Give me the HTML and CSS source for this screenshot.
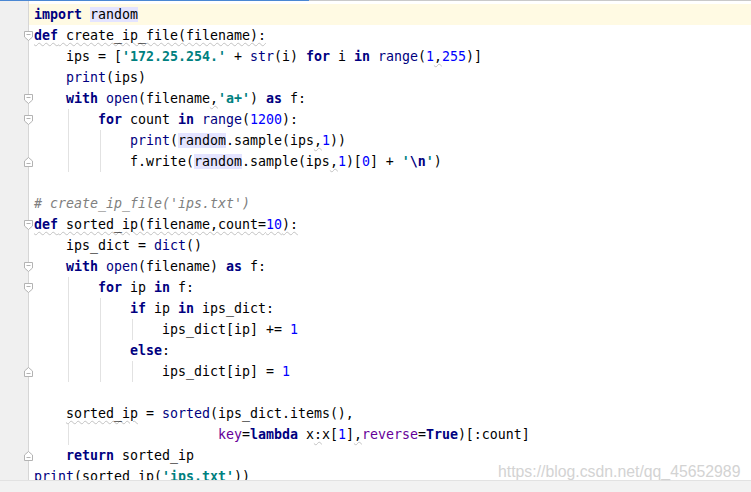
FILE: index.html
```html
<!DOCTYPE html>
<html>
<head>
<meta charset="utf-8">
<link rel="stylesheet" href="styles.css">
</head>
<body>
<div class="tabline"></div>
<div class="editor">
<div class="ln cur"><span class="kw">import</span> <span class="hl">random</span></div>
<div class="ln"><svg class="fold" viewBox="0 0 9 10"><path d="M0.5 0.5H8.5V6L4.5 9.5L0.5 6Z"/><path d="M2.5 3.5H6.5"/></svg><span class="wv"><span class="kw">def</span> create_ip_file(filename):</span></div>
<div class="ln">    ips = [<span class="st">'172.25.254.'</span> + <span class="bi">str</span>(i) <span class="kw">for</span> i <span class="kw">in</span> <span class="bi">range</span>(<span class="nu">1</span><span class="wv">,</span><span class="nu">255</span>)]</div>
<div class="ln">    <span class="bi">print</span>(ips)</div>
<div class="ln"><svg class="fold" viewBox="0 0 9 10"><path d="M0.5 0.5H8.5V6L4.5 9.5L0.5 6Z"/><path d="M2.5 3.5H6.5"/></svg>    <span class="kw">with</span> <span class="bi">open</span>(filename<span class="wv">,</span><span class="st">'a+'</span>) <span class="kw">as</span> f:</div>
<div class="ln g1"><svg class="fold" viewBox="0 0 9 10"><path d="M0.5 0.5H8.5V6L4.5 9.5L0.5 6Z"/><path d="M2.5 3.5H6.5"/></svg>        <span class="kw">for</span> count <span class="kw">in</span> <span class="bi">range</span>(<span class="nu">1200</span>):</div>
<div class="ln g12">            <span class="bi">print</span>(<span class="hl">random</span>.sample(ips<span class="wv">,</span><span class="nu">1</span>))</div>
<div class="ln g12"><svg class="fold" viewBox="0 0 9 10"><path d="M0.5 9.5H8.5V4L4.5 0.5L0.5 4Z"/><path d="M2.5 6.5H6.5"/></svg>            f.write(<span class="hl">random</span>.sample(ips<span class="wv">,</span><span class="nu">1</span>)[<span class="nu">0</span>] + <span class="st">'<span class="esc">\n</span>'</span>)</div>
<div class="ln"> </div>
<div class="ln"><span class="cm"># create_ip_file('ips.txt')</span></div>
<div class="ln"><svg class="fold" viewBox="0 0 9 10"><path d="M0.5 0.5H8.5V6L4.5 9.5L0.5 6Z"/><path d="M2.5 3.5H6.5"/></svg><span class="wv"><span class="kw">def</span> sorted_ip(filename,count=<span class="nu">10</span>):</span></div>
<div class="ln">    ips_dict = <span class="bi">dict</span>()</div>
<div class="ln"><svg class="fold" viewBox="0 0 9 10"><path d="M0.5 0.5H8.5V6L4.5 9.5L0.5 6Z"/><path d="M2.5 3.5H6.5"/></svg>    <span class="kw">with</span> <span class="bi">open</span>(filename) <span class="kw">as</span> f:</div>
<div class="ln g1"><svg class="fold" viewBox="0 0 9 10"><path d="M0.5 0.5H8.5V6L4.5 9.5L0.5 6Z"/><path d="M2.5 3.5H6.5"/></svg>        <span class="kw">for</span> ip <span class="kw">in</span> f:</div>
<div class="ln g12">            <span class="kw">if</span> ip <span class="kw">in</span> ips_dict:</div>
<div class="ln g123">                ips_dict[ip] += <span class="nu">1</span></div>
<div class="ln g12">            <span class="kw">else</span>:</div>
<div class="ln g123"><svg class="fold" viewBox="0 0 9 10"><path d="M0.5 9.5H8.5V4L4.5 0.5L0.5 4Z"/><path d="M2.5 6.5H6.5"/></svg>                ips_dict[ip] = <span class="nu">1</span></div>
<div class="ln"> </div>
<div class="ln">    <span class="wv">sorted_ip</span> = <span class="bi">sorted</span>(ips_dict.items(),</div>
<div class="ln g1">                       <span class="kwa">key</span>=<span class="kw">lambda</span> x<span class="wv">:</span>x[<span class="nu">1</span>]<span class="wv">,</span><span class="kwa">reverse</span>=<span class="kw">True</span>)[:count]</div>
<div class="ln"><svg class="fold" viewBox="0 0 9 10"><path d="M0.5 9.5H8.5V4L4.5 0.5L0.5 4Z"/><path d="M2.5 6.5H6.5"/></svg>    <span class="kw">return</span> sorted_ip</div>
<div class="ln"><span class="bi">print</span>(sorted_ip(<span class="st">'ips.txt'</span>))</div>
</div>
<div class="hbar"></div>
<div class="wm">https://blog.csdn.net/qq_45652989</div>
</body>
</html>
```
FILE: styles.css
```css
html, body {
  margin: 0;
  padding: 0;
  width: 751px;
  height: 492px;
  overflow: hidden;
  background: #ffffff;
}
body {
  position: relative;
}
.tabline {
  height: 1px;
  background: linear-gradient(to right, #4a87d3 309px, #c9c9c9 309px);
}
.editor {
  height: 476px;
  padding-top: 3px;
  overflow: hidden;
  background: linear-gradient(to right, #f0f0f0 28px, #d6d6d6 28px, #d6d6d6 29px, #ffffff 29px);
}
.ln {
  position: relative;
  height: 21px;
  line-height: 21px;
  padding-left: 34px;
  white-space: pre;
  font-family: "DejaVu Sans Mono", monospace;
  font-size: 13.29px;
  color: #000000;
}
.cur {
  background: linear-gradient(to right, transparent 29px, #fffae3 29px);
}
.g1 {
  background: linear-gradient(#e2e2e2, #e2e2e2) 68px 0 / 1px 100% no-repeat;
}
.g12 {
  background:
    linear-gradient(#e2e2e2, #e2e2e2) 68px 0 / 1px 100% no-repeat,
    linear-gradient(#e2e2e2, #e2e2e2) 100px 0 / 1px 100% no-repeat;
}
.g123 {
  background:
    linear-gradient(#e2e2e2, #e2e2e2) 68px 0 / 1px 100% no-repeat,
    linear-gradient(#e2e2e2, #e2e2e2) 100px 0 / 1px 100% no-repeat,
    linear-gradient(#e2e2e2, #e2e2e2) 132px 0 / 1px 100% no-repeat;
}
.fold {
  position: absolute;
  left: 24px;
  top: 6px;
  width: 9px;
  height: 10px;
  fill: #ffffff;
  stroke: #b3b3b3;
  stroke-width: 1;
}
.kw {
  color: #000080;
  font-weight: bold;
}
.bi {
  color: #000080;
}
.st {
  color: #008080;
  font-weight: bold;
}
.esc {
  color: #000080;
}
.nu {
  color: #0000ff;
}
.cm {
  color: #808080;
  font-style: italic;
}
.kwa {
  color: #660099;
}
.hl {
  background: #e4e4ff;
}
.wv {
  text-decoration: underline wavy #c2c2c2;
  text-decoration-thickness: 1px;
  text-underline-offset: 2px;
}
.hbar {
  height: 11px;
  border-top: 1px solid #e2e2e2;
  background: #f2f2f2;
}
.wm {
  position: absolute;
  left: 498px;
  top: 464px;
  font-family: "Liberation Sans", Arial, sans-serif;
  font-size: 15.8px;
  line-height: 16px;
  color: #d3d3d3;
  white-space: nowrap;
}
```
